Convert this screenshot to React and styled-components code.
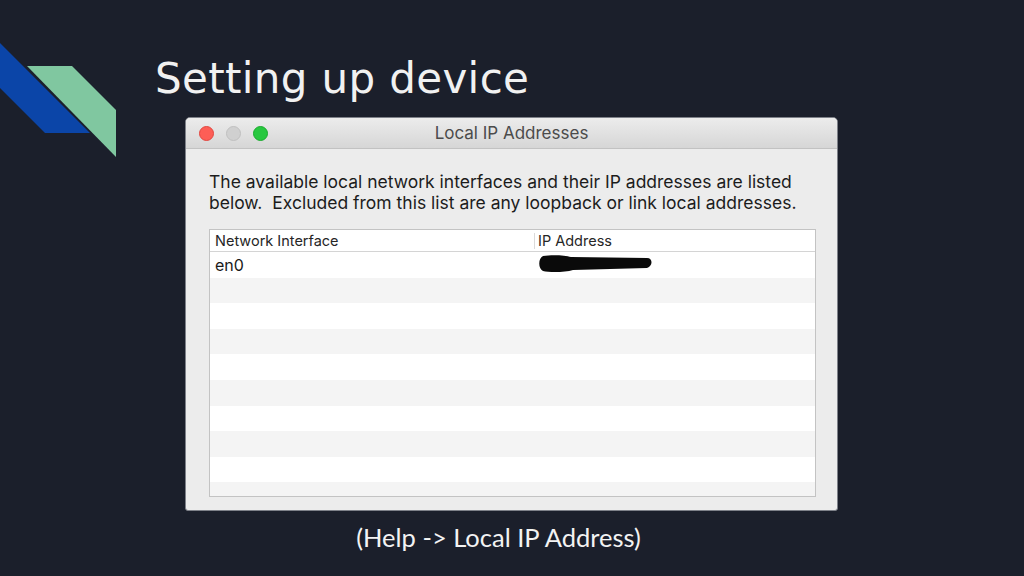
import React from 'react';
import styled, {createGlobalStyle} from 'styled-components';

const GlobalStyle = createGlobalStyle`
  html, body {
    margin: 0;
    padding: 0;
    background: #1b1f2b;
  }
`;

const Slide = styled.div`
  width: 1024px;
  height: 576px;
  background: #1b1f2b;
  display: flex;
  flex-direction: column;
  overflow: hidden;
`;

const Top = styled.div`
  display: grid;
  grid-template-columns: 155px 1fr;
`;

const LogoCell = styled.div`
  padding-top: 43px;
`;

const Main = styled.div`
  padding-top: 55px;
  display: flex;
  flex-direction: column;
`;

const Title = styled.h1`
  margin: 0;
  font-family: "DejaVu Sans", sans-serif;
  font-weight: 400;
  font-size: 42px;
  line-height: 48px;
  letter-spacing: 0.35px;
  color: #f1f1f1;
`;

const Window = styled.div`
  margin: 14px 0 0 30px;
  width: 651px;
  height: 392px;
  border: 1px solid #7e8189;
  border-radius: 5px 5px 3px 3px;
  background: #ececec;
  display: flex;
  flex-direction: column;
  overflow: hidden;
  font-family: "Inter", "Liberation Sans", sans-serif;
`;

const TitleBar = styled.div`
  flex: 0 0 30px;
  border-bottom: 1px solid #c2c2c2;
  background: linear-gradient(#ececec, #d6d6d6);
  display: grid;
  grid-template-columns: 1fr auto 1fr;
  align-items: center;
`;

const Lights = styled.div`
  display: flex;
  gap: 12px;
  padding-left: 13px;
`;

const Light = styled.span`
  width: 15px;
  height: 15px;
  border-radius: 50%;
  box-sizing: border-box;
  background: ${p => p.color};
  border: 1px solid ${p => p.edge};
`;

const WindowTitle = styled.div`
  font-size: 17px;
  color: #4b4b4b;
`;

const Body = styled.div`
  flex: 1;
  display: flex;
  flex-direction: column;
  padding: 22px 21px 13px 23px;
  min-height: 0;
`;

const Description = styled.p`
  margin: 0 0 16px;
  font-size: 17.5px;
  line-height: 21px;
  color: #1c1c1c;
  white-space: nowrap;
`;

const Table = styled.div`
  flex: 1;
  border: 1px solid #c3c3c3;
  background: #fff;
  display: flex;
  flex-direction: column;
  overflow: hidden;
`;

const HeaderRow = styled.div`
  flex: 0 0 21px;
  border-bottom: 1px solid #d4d4d4;
  display: grid;
  grid-template-columns: 324px 1fr;
  align-items: center;
  background: #fff;
`;

const HeaderCell = styled.div`
  font-size: 14.5px;
  color: #262626;
  padding-left: ${p => (p.divided ? '3px' : '5px')};
  border-left: ${p => (p.divided ? '1px solid #dadada' : 'none')};
  line-height: 16px;
`;

const Row = styled.div`
  flex: 0 0 25.6px;
  display: grid;
  grid-template-columns: 324px 1fr;
  align-items: center;
  background: ${p => (p.striped ? '#f4f4f4' : '#ffffff')};
`;

const Cell = styled.div`
  font-size: 16px;
  color: #1a1a1a;
  padding-left: 5px;
  display: flex;
  align-items: center;
`;

const Redacted = styled.svg`
  margin-left: 0;
  margin-top: -2px;
  display: block;
`;

const Caption = styled.div`
  margin-top: 11px;
  padding-right: 27px;
  text-align: center;
  font-family: "Lato", sans-serif;
  font-size: 25.5px;
  line-height: 30px;
  color: #f3f3f3;
`;

function Logo() {
  return (
    <svg width="117" height="115" viewBox="0 0 117 115">
      <polygon points="0,0 90,90 45,90 0,45" fill="#0b45a8" />
      <polygon points="27,23 72,23 116,67 116,114" fill="#80c7a0" />
    </svg>
  );
}

const rows = Array.from({length: 10}, (_, i) => i);

export default function App() {
  return (
    <>
      <GlobalStyle />
      <Slide>
        <Top>
          <LogoCell>
            <Logo />
          </LogoCell>
          <Main>
            <Title>Setting up device</Title>
            <Window>
              <TitleBar>
                <Lights>
                  <Light color="#fd5e56" edge="#e2463f" />
                  <Light color="#d0d0d0" edge="#c0c0c0" />
                  <Light color="#28c840" edge="#1aab2e" />
                </Lights>
                <WindowTitle>Local IP Addresses</WindowTitle>
                <div />
              </TitleBar>
              <Body>
                <Description>
                  The available local network interfaces and their IP addresses are listed<br />
                  below.&nbsp; Excluded from this list are any loopback or link local addresses.
                </Description>
                <Table>
                  <HeaderRow>
                    <HeaderCell>Network Interface</HeaderCell>
                    <HeaderCell divided>IP Address</HeaderCell>
                  </HeaderRow>
                  {rows.map(i => (
                    <Row key={i} striped={i % 2 === 1}>
                      <Cell>{i === 0 ? 'en0' : ''}</Cell>
                      <Cell>
                        {i === 0 && (
                          <Redacted width="114" height="18" viewBox="0 0 114 18">
                            <path
                              d="M4 1 C12 -0.5 26 0 32 2 L108 3 C114 3 114 11 108 13 L34 15 C26 17.5 10 17.5 4 16 C-1 14 -1 3 4 1 Z"
                              fill="#0a0a0a"
                            />
                          </Redacted>
                        )}
                      </Cell>
                    </Row>
                  ))}
                </Table>
              </Body>
            </Window>
          </Main>
        </Top>
        <Caption>(Help -&gt; Local IP Address)</Caption>
      </Slide>
    </>
  );
}
